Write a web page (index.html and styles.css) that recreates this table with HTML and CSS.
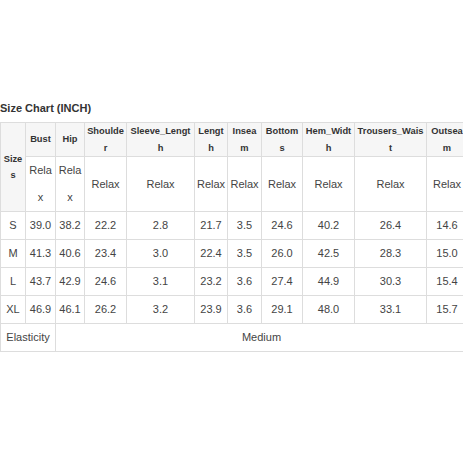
FILE: index.html
```html
<!DOCTYPE html>
<html>
<head>
<meta charset="utf-8">
<link rel="stylesheet" href="styles.css">
</head>
<body>
<div class="page">
  <div class="title">Size Chart (INCH)</div>
  <table class="chart">
    <colgroup>
      <col class="c-size"><col class="c-bust"><col class="c-hip"><col class="c-shoulder"><col class="c-sleeve"><col class="c-length"><col class="c-inseam"><col class="c-bottoms"><col class="c-hem"><col class="c-waist"><col class="c-outseam">
    </colgroup>
    <tr class="head">
      <th rowspan="2">Sizes</th>
      <th>Bust</th><th>Hip</th><th>Shoulder</th><th>Sleeve_Length</th><th>Length</th><th>Inseam</th><th>Bottoms</th><th>Hem_Width</th><th>Trousers_Waist</th><th>Outseam</th>
    </tr>
    <tr>
      <td>Relax</td><td>Relax</td><td>Relax</td><td>Relax</td><td>Relax</td><td>Relax</td><td>Relax</td><td>Relax</td><td>Relax</td><td>Relax</td>
    </tr>
    <tr><td>S</td><td>39.0</td><td>38.2</td><td>22.2</td><td>2.8</td><td>21.7</td><td>3.5</td><td>24.6</td><td>40.2</td><td>26.4</td><td>14.6</td></tr>
    <tr><td>M</td><td>41.3</td><td>40.6</td><td>23.4</td><td>3.0</td><td>22.4</td><td>3.5</td><td>26.0</td><td>42.5</td><td>28.3</td><td>15.0</td></tr>
    <tr><td>L</td><td>43.7</td><td>42.9</td><td>24.6</td><td>3.1</td><td>23.2</td><td>3.6</td><td>27.4</td><td>44.9</td><td>30.3</td><td>15.4</td></tr>
    <tr><td>XL</td><td>46.9</td><td>46.1</td><td>26.2</td><td>3.2</td><td>23.9</td><td>3.6</td><td>29.1</td><td>48.0</td><td>33.1</td><td>15.7</td></tr>
    <tr><td colspan="2">Elasticity</td><td colspan="9">Medium</td></tr>
  </table>
</div>
</body>
</html>
```
FILE: styles.css
```css
html, body {
  margin: 0;
  padding: 0;
  background: #fff;
}
.page {
  width: 463px;
  height: 463px;
  overflow: hidden;
  padding-top: 100px;
  box-sizing: border-box;
  font-family: "Liberation Sans", Arial, sans-serif;
  color: #333;
}
.title {
  font-size: 11px;
  font-weight: bold;
  line-height: 16px;
  margin-bottom: 6px;
}
.chart {
  border-collapse: collapse;
  table-layout: fixed;
  width: 467px;
}
.chart th, .chart td {
  border: 1px solid #ddd;
  text-align: center;
  vertical-align: middle;
  word-break: break-all;
}
.chart th {
  background: #f6f6f6;
  font-size: 9.3px;
  font-weight: bold;
  line-height: 16.5px;
  padding: 0 2px;
  color: #333;
}
.chart td {
  font-size: 11px;
  line-height: 27px;
  padding: 0 1px;
  color: #444;
}
.c-size { width: 25px; }
.c-bust { width: 30px; }
.c-hip { width: 29px; }
.c-shoulder { width: 42px; }
.c-sleeve { width: 68px; }
.c-length { width: 33px; }
.c-inseam { width: 34px; }
.c-bottoms { width: 41px; }
.c-hem { width: 52px; }
.c-waist { width: 72px; }
.c-outseam { width: 41px; }
```
